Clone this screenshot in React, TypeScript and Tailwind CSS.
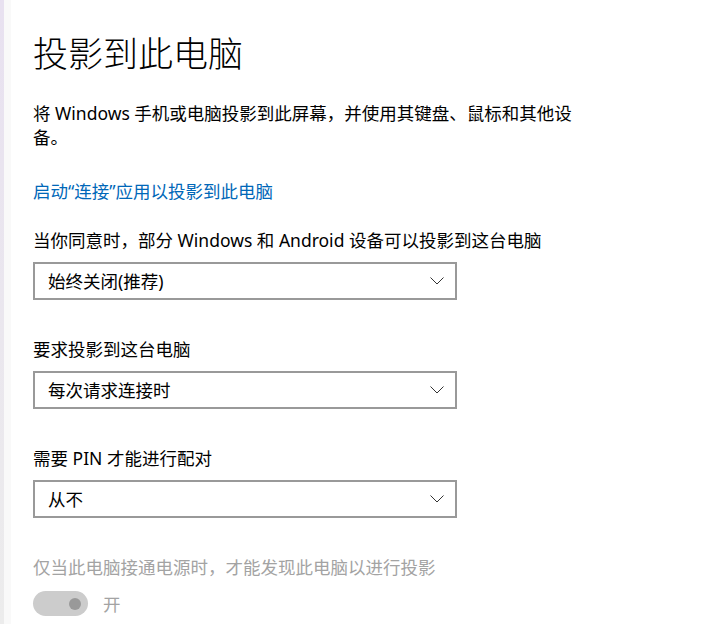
const font = { fontFamily: '"Noto Sans", "Noto Sans CJK SC", sans-serif' };

function Chevron() {
  return (
    <svg width="14" height="8" viewBox="0 0 14 8" fill="none" className="shrink-0">
      <path d="M0.5 0.5 L7 7 L13.5 0.5" stroke="#333" strokeWidth="1" />
    </svg>
  );
}

function Select({ value }: { value: string }) {
  return (
    <div className="flex h-[38px] w-[424px] items-center justify-between border-2 border-[#999999] bg-white pl-[13px] pr-[11px]">
      <span className="text-[17.5px] leading-[24px] text-black">{value}</span>
      <Chevron />
    </div>
  );
}

export default function App() {
  return (
    <div className="flex h-[624px] w-[726px] bg-white" style={font}>
      <div className="w-[4px] bg-gradient-to-b from-[#e8e1f0] to-[#ececec]" />
      <div className="w-[7px] bg-[#f9f9f9]" />
      <main className="flex flex-1 flex-col pl-[22px] pt-[30px]">
        <h1 className="text-[35px] font-light leading-[48px] text-black">投影到此电脑</h1>

        <p className="mt-[23px] max-w-[548px] text-[17.5px] leading-[24px] text-black">
          将 Windows 手机或电脑投影到此屏幕，并使用其键盘、鼠标和其他设备。
        </p>

        <a className="mt-[30px] text-[17.5px] leading-[24px] text-[#0067b8]">
          启动“连接”应用以投影到此电脑
        </a>

        <div className="mt-[25px] text-[17.5px] leading-[24px] text-black">
          当你同意时，部分 Windows 和 Android 设备可以投影到这台电脑
        </div>
        <div className="mt-[10px]">
          <Select value="始终关闭(推荐)" />
        </div>

        <div className="mt-[37px] text-[17.5px] leading-[24px] text-black">要求投影到这台电脑</div>
        <div className="mt-[10px]">
          <Select value="每次请求连接时" />
        </div>

        <div className="mt-[37px] text-[17.5px] leading-[24px] text-black">需要 PIN 才能进行配对</div>
        <div className="mt-[10px]">
          <Select value="从不" />
        </div>

        <div className="mt-[37px] text-[17.5px] leading-[24px] text-[#a3a3a3]">
          仅当此电脑接通电源时，才能发现此电脑以进行投影
        </div>
        <div className="mt-[12px] flex items-center gap-[15px]">
          <div className="flex h-[25px] w-[55px] items-center justify-end rounded-full bg-[#cccccc] pr-[7px]">
            <div className="h-[12px] w-[12px] rounded-full bg-[#999999]" />
          </div>
          <span className="text-[17.5px] leading-[24px] text-[#a3a3a3]">开</span>
        </div>
      </main>
    </div>
  );
}
